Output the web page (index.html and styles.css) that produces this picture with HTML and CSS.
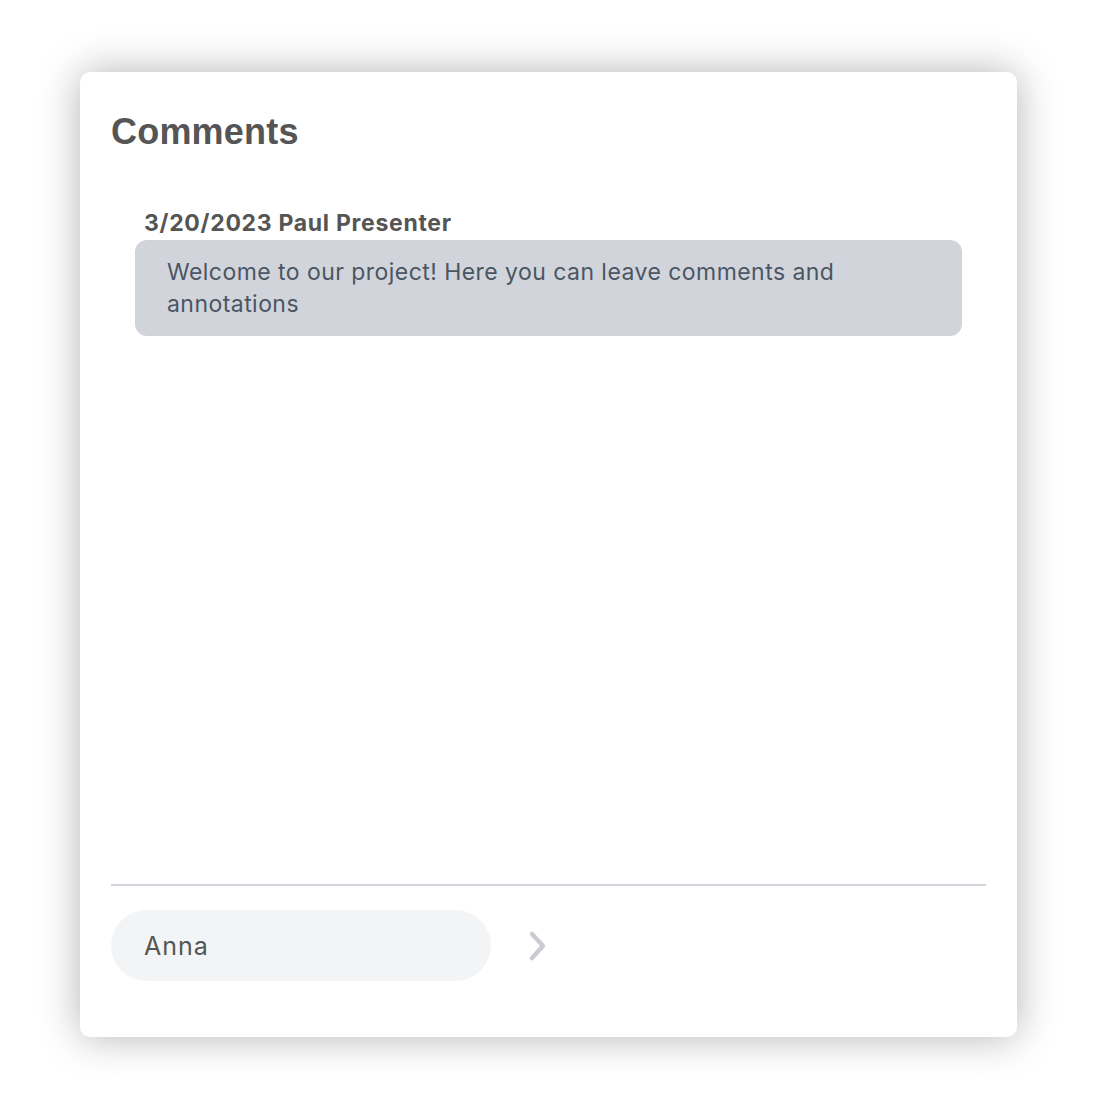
FILE: index.html
```html
<!DOCTYPE html>
<html lang="en">
  <head>
    <meta charset="UTF-8" />
    <meta name="viewport" content="width=device-width, initial-scale=1.0" />
    <title>Comments</title>
    <link rel="stylesheet" href="styles.css">
  </head>
  <body>
    <div class="panel">
      <h1 class="title">Comments</h1>
      <div class="comment-list">
        <div class="comment">
          <div class="comment-meta">3/20/2023 Paul Presenter</div>
          <div class="bubble">
            Welcome to our project! Here you can leave comments and annotations
          </div>
        </div>
      </div>
      <form class="composer">
        <input class="composer-input" type="text" value="Anna" />
        <button class="send-btn" type="submit" aria-label="Send">
          <svg width="22" height="32" viewBox="0 0 22 32">
            <path d="M5 4 L16 16 L5 28" fill="none" stroke="#c9ccd3" stroke-width="4.5" stroke-linecap="round" stroke-linejoin="round" />
          </svg>
        </button>
      </form>
    </div>
  </body>
</html>
```

FILE: styles.css
```css
body {
  margin: 0;
  padding: 72px 81px 77px 80px;
  background: #ffffff;
  font-family: "Inter", "Liberation Sans", sans-serif;
}

.panel {
  height: 965px;
  box-sizing: border-box;
  background: #ffffff;
  border-radius: 10px;
  box-shadow: 0 0 40px rgba(0, 0, 0, 0.3);
  padding: 28px 31px 56px 31px;
  display: flex;
  flex-direction: column;
}

.title {
  margin: 0;
  font-family: "Liberation Sans", sans-serif;
  font-size: 36px;
  font-weight: 700;
  color: #555555;
  line-height: 64px;
  letter-spacing: 0.2px;
}

.comment-list {
  flex: 1;
  padding: 44px 24px 0 24px;
}

.comment-meta {
  font-size: 23px;
  font-weight: 700;
  color: #555555;
  padding-left: 9px;
  line-height: 30px;
  letter-spacing: 0.7px;
}

.bubble {
  margin-top: 2px;
  background: #d1d5db;
  border-radius: 12px;
  padding: 16px 32px 16px 32px;
  font-size: 23px;
  line-height: 32px;
  letter-spacing: 0.45px;
  color: #4b5563;
}

.composer {
  border-top: 2px solid #d1d5db;
  padding-top: 24px;
  display: flex;
  align-items: center;
  gap: 36px;
}

.composer-input {
  width: 380px;
  height: 71px;
  box-sizing: border-box;
  border: none;
  border-radius: 36px;
  background: #f3f4f6;
  padding: 0 33px;
  font-family: "Inter", "Liberation Sans", sans-serif;
  font-size: 25px;
  letter-spacing: 1px;
  color: #555555;
  outline: none;
}

.send-btn {
  border: none;
  background: none;
  padding: 0;
  display: flex;
  cursor: pointer;
}
```
